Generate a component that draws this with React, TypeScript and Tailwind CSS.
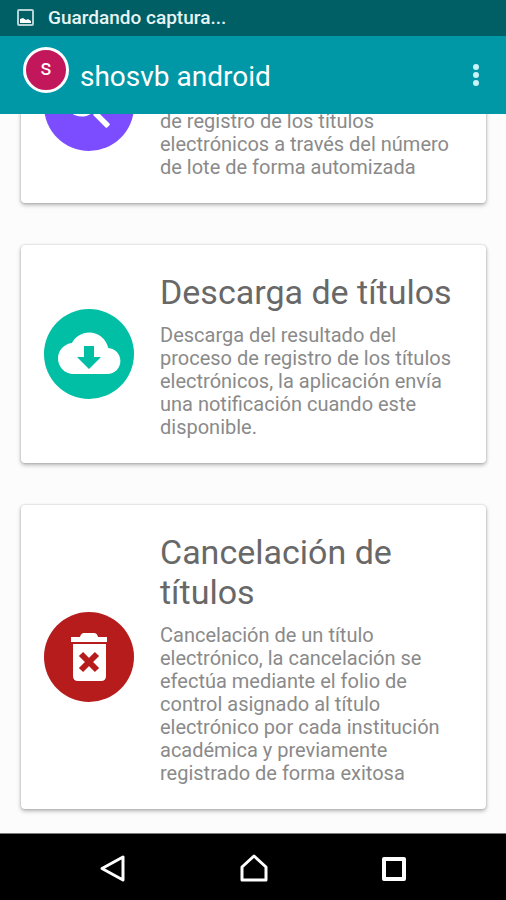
import { useLayoutEffect, useRef } from 'react';
import type { ReactNode } from 'react';

type Service = {
  title?: string;
  text: string;
  color: string;
  icon: ReactNode;
};

const services: Service[] = [
  {
    text: 'de registro de los títulos electrónicos a través del número de lote de forma automizada',
    color: 'bg-[#7c4dff]',
    icon: (
      <svg viewBox="0 0 90 90" className="size-full" aria-hidden="true">
        <path
          fill="#fff"
          transform="translate(13 14) scale(2.6)"
          d="M15.500 14h-.79l-.28-.27A6.470 6.470 0 0 0 16 9.500 6.500 6.500 0 1 0 9.500 16c1.610 0 3.090-.59 4.230-1.570l.27.28v.79l4.600 4.590q.4.400.8 0l.69-.69q.4-.4 0-.8zM9.500 14A4.500 4.500 0 1 1 9.500 5a4.500 4.500 0 0 1 0 9z"
        />
      </svg>
    ),
  },
  {
    title: 'Descarga de títulos',
    text: 'Descarga del resultado del proceso de registro de los títulos electrónicos, la aplicación envía una notificación cuando este disponible.',
    color: 'bg-[#00bfa5]',
    icon: (
      <svg viewBox="0 0 90 90" className="size-full" aria-hidden="true">
        <path
          fill="#fff"
          transform="translate(14 13) scale(2.6)"
          d="M19.350 10.040C18.670 6.590 15.640 4 12 4 9.110 4 6.600 5.640 5.350 8.040 2.340 8.360 0 10.910 0 14c0 3.310 2.690 6 6 6h13c2.760 0 5-2.240 5-5 0-2.640-2.050-4.780-4.650-4.960z"
        />
        <path fill="#00bfa5" d="M40 37h10v11h7L45 60L33 48h7Z" />
      </svg>
    ),
  },
  {
    title: 'Cancelación de títulos',
    text: 'Cancelación de un título electrónico, la cancelación se efectúa mediante el folio de control asignado al título electrónico por cada institución académica y previamente registrado de forma exitosa',
    color: 'bg-[#b71c1c]',
    icon: (
      <svg viewBox="0 0 90 90" className="size-full" aria-hidden="true">
        <path
          fill="#fff"
          d="M27 25h9q1-4 4-4h10q3 0 4 4h9v5H27ZM29 32h33v32q0 5-5 5H34q-5 0-5-5Z"
        />
        <path d="M37 42l16 16M53 42L37 58" stroke="#b71c1c" strokeWidth="6" />
      </svg>
    ),
  },
];

function StatusBar() {
  return (
    <div className="flex h-9 shrink-0 items-center bg-[#005f64] px-4 text-[#e6f4f4]">
      <svg viewBox="0 0 20 20" className="size-5" aria-hidden="true">
        <rect x="2" y="2" width="15" height="15" rx="1" fill="none" stroke="#b5d3d4" strokeWidth="2" />
        <path d="M4 15v-4l3-1l3 2l2-1l3 2v2Z" fill="#fff" />
      </svg>
      <p className="ml-3 text-[19px] font-medium">Guardando captura...</p>
    </div>
  );
}

function AppBar() {
  return (
    <header className="flex h-[78px] shrink-0 items-center bg-[#0097a7] pt-1 pr-4 pl-[23px] text-white">
      <div className="mb-[14px] flex size-[46px] items-center justify-center rounded-full border-3 border-white bg-[#c2185b] pb-1 text-[22px] leading-none">
        s
      </div>
      <h1 className="ml-[11px] flex-1 text-[28px]">shosvb android</h1>
      <button type="button" aria-label="Más opciones" className="mb-1 flex h-10 w-7 items-center justify-center">
        <svg viewBox="0 0 6 24" className="h-6 w-[6px]" fill="#c9f3f7" aria-hidden="true">
          <circle cx="3" cy="4" r="3" />
          <circle cx="3" cy="12" r="3" />
          <circle cx="3" cy="20" r="3" />
        </svg>
      </button>
    </header>
  );
}

function ServiceCard({ title, text, color, icon }: Service) {
  return (
    <article className="flex min-h-[195px] items-center gap-[26px] rounded-[4px] bg-white pt-[27px] pr-8 pb-6 pl-[23px] shadow-[0_2px_4px_rgba(0,0,0,0.3),0_0_2px_rgba(0,0,0,0.2)]">
      <div className={`-mt-[3px] size-[90px] shrink-0 rounded-full ${color}`}>{icon}</div>
      <div className="min-w-0 flex-1 self-end">
        {title && <h2 className="mb-3 text-[34px] leading-10 text-[#686868]">{title}</h2>}
        <p className="text-[20px] leading-[23px] text-[#8a8a8a]">{text}</p>
      </div>
    </article>
  );
}

function NavigationBar() {
  return (
    <nav className="flex h-[67px] shrink-0 items-center justify-center gap-[101px] border-t border-[#7c7c7c] bg-black pt-1 text-white">
      <button type="button" aria-label="Atrás" className="size-10 p-1">
        <svg viewBox="0 0 32 32" className="size-8" fill="none" stroke="currentColor" strokeWidth="3" strokeLinejoin="round" aria-hidden="true">
          <path d="M27 4v23L6 15.500Z" />
        </svg>
      </button>
      <button type="button" aria-label="Inicio" className="size-10 p-1">
        <svg viewBox="0 0 32 32" className="size-8" fill="none" stroke="currentColor" strokeWidth="3" strokeLinejoin="round" aria-hidden="true">
          <path d="M5 27V14L17 3l12 11v13Z" />
        </svg>
      </button>
      <button type="button" aria-label="Recientes" className="size-10 p-1">
        <svg viewBox="0 0 32 32" className="size-8" fill="none" stroke="currentColor" strokeWidth="4" strokeLinejoin="round" aria-hidden="true">
          <rect x="6" y="6" width="20" height="20" />
        </svg>
      </button>
    </nav>
  );
}

export default function App() {
  const list = useRef<HTMLElement>(null);

  // Open the list at its end.
  useLayoutEffect(() => {
    if (list.current) list.current.scrollTop = list.current.scrollHeight;
  }, []);

  return (
    <div className="flex h-screen flex-col bg-[#fcfcfc] font-[Roboto,'Liberation_Sans',sans-serif]">
      <StatusBar />
      <AppBar />
      <main ref={list} className="min-h-0 flex-1 overflow-y-auto [scrollbar-width:none]">
        <div className="flex flex-col gap-[42px] py-6 pr-5 pl-[21px]">
          {services.map((service) => (
            <ServiceCard key={service.text} {...service} />
          ))}
        </div>
      </main>
      <NavigationBar />
    </div>
  );
}
